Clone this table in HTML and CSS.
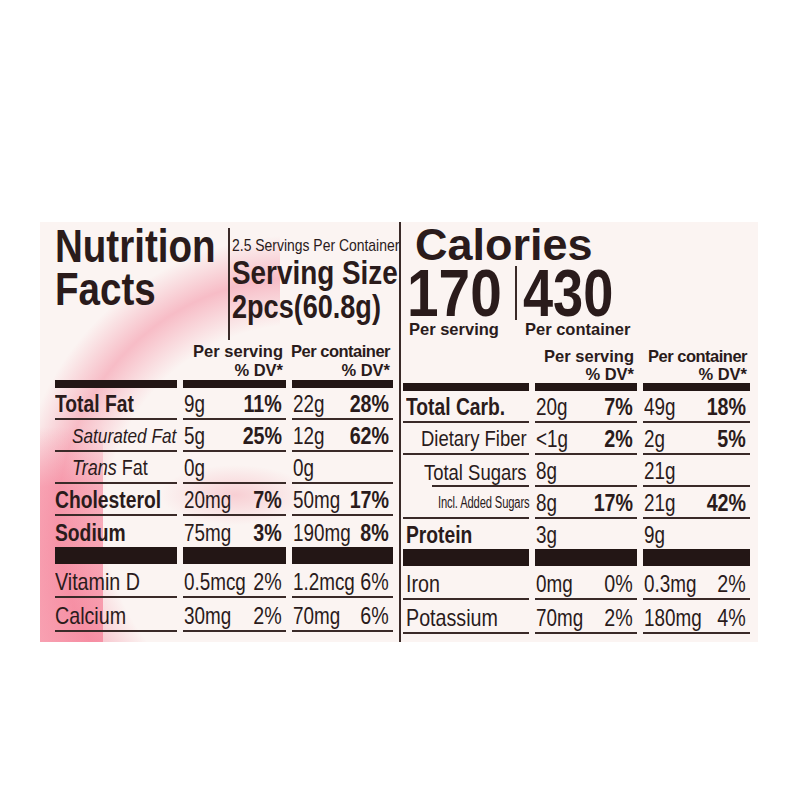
FILE: index.html
```html
<!DOCTYPE html>
<html lang="en">
<head>
  <meta charset="UTF-8" />
  <title>Nutrition Facts</title>
  <link rel="stylesheet" href="styles.css">
</head>
<body>
  <div class="label">
    <div class="half left">
      <div class="head">
        <div class="title"><span class="n">Nutrition</span><span class="n">Facts</span></div>
        <div class="serving">
          <div class="count n">2.5 Servings Per Container</div>
          <div class="size n">Serving Size</div>
          <div class="size amount n">2pcs(60.8g)</div>
        </div>
      </div>
      <div class="table">
        <div class="cell hdr"></div>
        <div class="cell hdr"><span>Per serving</span><span>% DV*</span></div>
        <div class="cell hdr"><span class="cont">Per container</span><span>% DV*</span></div>

        <div class="cell lbl b"><span class="n">Total Fat</span></div>
        <div class="cell val"><span class="amt n">9g</span><b class="pct n">11%</b></div>
        <div class="cell val"><span class="amt n">22g</span><b class="pct n">28%</b></div>

        <div class="cell lbl sub"><i class="n">Saturated Fat</i></div>
        <div class="cell val"><span class="amt n">5g</span><b class="pct n">25%</b></div>
        <div class="cell val"><span class="amt n">12g</span><b class="pct n">62%</b></div>

        <div class="cell lbl sub trans"><span class="n"><i>Trans</i> Fat</span></div>
        <div class="cell val"><span class="amt n">0g</span></div>
        <div class="cell val"><span class="amt n">0g</span></div>

        <div class="cell lbl b"><span class="n">Cholesterol</span></div>
        <div class="cell val"><span class="amt n">20mg</span><b class="pct n">7%</b></div>
        <div class="cell val"><span class="amt n">50mg</span><b class="pct n">17%</b></div>

        <div class="cell lbl b thick"><span class="n">Sodium</span></div>
        <div class="cell val thick"><span class="amt n">75mg</span><b class="pct n">3%</b></div>
        <div class="cell val thick"><span class="amt n">190mg</span><b class="pct n">8%</b></div>

        <div class="cell lbl vit"><span class="n">Vitamin D</span></div>
        <div class="cell val vit"><span class="amt n">0.5mcg</span><span class="pct n">2%</span></div>
        <div class="cell val vit"><span class="amt n">1.2mcg</span><span class="pct n">6%</span></div>

        <div class="cell lbl vit"><span class="n">Calcium</span></div>
        <div class="cell val vit"><span class="amt n">30mg</span><span class="pct n">2%</span></div>
        <div class="cell val vit"><span class="amt n">70mg</span><span class="pct n">6%</span></div>
      </div>
    </div>

    <div class="half right">
      <div class="calories">
        <div class="cal-title">Calories</div>
        <div class="cal-nums">
          <span class="n1"><span class="n">170</span></span>
          <span class="n2"><span class="n">430</span></span>
        </div>
        <div class="cal-sub">
          <span class="s1">Per serving</span>
          <span class="s2">Per container</span>
        </div>
      </div>
      <div class="table">
        <div class="cell hdr"></div>
        <div class="cell hdr"><span>Per serving</span><span>% DV*</span></div>
        <div class="cell hdr"><span class="cont">Per container</span><span>% DV*</span></div>

        <div class="cell lbl b"><span class="n">Total Carb.</span></div>
        <div class="cell val"><span class="amt n">20g</span><b class="pct n">7%</b></div>
        <div class="cell val"><span class="amt n">49g</span><b class="pct n">18%</b></div>

        <div class="cell lbl sub fiber"><span class="n">Dietary Fiber</span></div>
        <div class="cell val"><span class="amt n">&lt;1g</span><b class="pct n">2%</b></div>
        <div class="cell val"><span class="amt n">2g</span><b class="pct n">5%</b></div>

        <div class="cell lbl sub sugars"><span class="n">Total Sugars</span></div>
        <div class="cell val"><span class="amt n">8g</span></div>
        <div class="cell val"><span class="amt n">21g</span></div>

        <div class="cell lbl added"><span class="n">Incl. Added Sugars</span></div>
        <div class="cell val"><span class="amt n">8g</span><b class="pct n">17%</b></div>
        <div class="cell val"><span class="amt n">21g</span><b class="pct n">42%</b></div>

        <div class="cell lbl b thick"><span class="n">Protein</span></div>
        <div class="cell val thick"><span class="amt n">3g</span></div>
        <div class="cell val thick"><span class="amt n">9g</span></div>

        <div class="cell lbl vit"><span class="n">Iron</span></div>
        <div class="cell val vit"><span class="amt n">0mg</span><span class="pct n">0%</span></div>
        <div class="cell val vit"><span class="amt n">0.3mg</span><span class="pct n">2%</span></div>

        <div class="cell lbl vit"><span class="n">Potassium</span></div>
        <div class="cell val vit"><span class="amt n">70mg</span><span class="pct n">2%</span></div>
        <div class="cell val vit"><span class="amt n">180mg</span><span class="pct n">4%</span></div>
      </div>
    </div>
  </div>
</body>
</html>
```

FILE: styles.css
```css
body {
  margin: 0;
  background: #fff;
}

.label {
  width: 718px;
  height: 420px;
  margin: 222px 0 0 40px;
  display: grid;
  grid-template-columns: 361px 357px;
  color: #2a1b1b;
  font-family: "Liberation Sans", Arial, sans-serif;
  background:
    linear-gradient(to bottom, rgba(246, 120, 146, 0) 0, rgba(246, 120, 146, 0.55) 60px, rgba(246, 120, 146, 0.68) 100%) 0 205px / 63px 215px no-repeat,
    radial-gradient(ellipse 75px 30px at 50% 50%, rgba(240, 120, 140, 0.3), rgba(240, 120, 140, 0)) 120px 243px / 150px 60px no-repeat,
    radial-gradient(circle at 260px 298px, rgba(242, 120, 145, 0) 195px, rgba(242, 120, 145, 0.45) 242px, rgba(242, 120, 145, 0) 285px) 0 0 / 240px 420px no-repeat,
    #fbf4f2;
}

/* condensed type: the label face is a narrow grotesque */
.n {
  display: inline-block;
  transform: scaleX(0.82);
  transform-origin: 0 50%;
}

.left {
  padding: 0 6px 0 15px;
  border-right: 2px solid #3a2a28;
}

.right {
  padding: 0 8px 0 2px;
}

/* heading */

.head {
  display: flex;
  height: 120px;
}

.title {
  flex: none;
  width: 173px;
  padding-top: 2px;
  font-weight: 700;
  font-size: 47px;
  line-height: 43px;
  white-space: nowrap;
}

.title .n {
  display: block;
}

.serving {
  min-width: 0;
  margin-top: 6px;
  height: 102px;
  padding: 10px 0 0 2px;
  border-left: 2px solid #3a2a28;
  white-space: nowrap;
}

.serving .n {
  display: block;
}

.count {
  font-size: 17px;
  line-height: 16px;
}

.size {
  font-size: 34px;
  font-weight: 700;
  line-height: 36px;
}

.size.amount {
  font-size: 33px;
  line-height: 34px;
}

/* calories */

.calories {
  height: 125px;
  padding-left: 4px;
}

.cal-title {
  padding: 2px 0 0 8px;
  font-size: 45px;
  font-weight: 700;
  line-height: 42px;
}

.cal-nums {
  display: flex;
  font-size: 66px;
  font-weight: 700;
  line-height: 54px;
}

.n1 {
  flex: none;
  width: 108px;
}

.n1 .n {
  transform: scaleX(0.86);
}

.n2 {
  padding-left: 6px;
  border-left: 2px solid #3a2a28;
}

.cal-sub {
  display: flex;
  margin-top: 1px;
  font-size: 16.5px;
  font-weight: 700;
  line-height: 16px;
  white-space: nowrap;
}

.s1 {
  flex: none;
  width: 108px;
  padding-left: 2px;
}

.s2 {
  padding-left: 8px;
}

/* table */

.table {
  display: grid;
  column-gap: 6px;
}

.left .table {
  grid-template-columns: 122px 103px minmax(0, 1fr);
}

.right .table {
  grid-template-columns: 126px 102px minmax(0, 1fr);
}

.cell {
  box-sizing: border-box;
  min-width: 0;
  height: 32px;
  display: flex;
  align-items: flex-end;
  justify-content: space-between;
  padding-bottom: 2px;
  border-bottom: 2px solid #3a2a28;
  line-height: 24px;
  white-space: nowrap;
}

.cell.hdr {
  height: 46px;
  flex-direction: column;
  align-items: flex-end;
  justify-content: flex-start;
  padding: 0 3px 0 0;
  border-bottom: 8px solid #231615;
  font-size: 16.5px;
  font-weight: 700;
  line-height: 19px;
}

.right .cell.hdr {
  height: 44px;
  line-height: 18px;
}

.cont {
  letter-spacing: -0.5px;
}

.cell.thick {
  height: 48px;
  border-bottom: 17px solid #231615;
}

.right .cell.thick {
  height: 47px;
}

.cell.vit {
  height: 34px;
}

.lbl {
  font-size: 24px;
}

.right .lbl {
  padding-left: 3px;
}

.lbl.b {
  font-size: 23.5px;
  font-weight: 700;
}

.lbl.sub {
  padding-left: 17px;
  font-size: 21px;
}

.right .lbl.sub {
  padding-left: 18px;
}

.lbl.trans {
  font-size: 22px;
}

.lbl.fiber {
  font-size: 22.5px;
}

.right .lbl.sugars {
  padding-left: 21px;
  font-size: 22.5px;
  border-bottom: none;
  background: linear-gradient(#3a2a28, #3a2a28) 29px 100% / calc(100% - 29px) 2px no-repeat;
}

.right .lbl.added {
  padding-left: 35px;
  font-size: 16px;
  letter-spacing: -0.2px;
}

.lbl.added .n {
  transform: scaleX(0.7);
}

.val {
  padding-left: 1px;
  padding-right: 4px;
}

.amt {
  flex: 1 1 0;
  min-width: 0;
  font-size: 23px;
}

.pct {
  flex: none;
  font-size: 24px;
  transform-origin: 100% 50%;
}
```
